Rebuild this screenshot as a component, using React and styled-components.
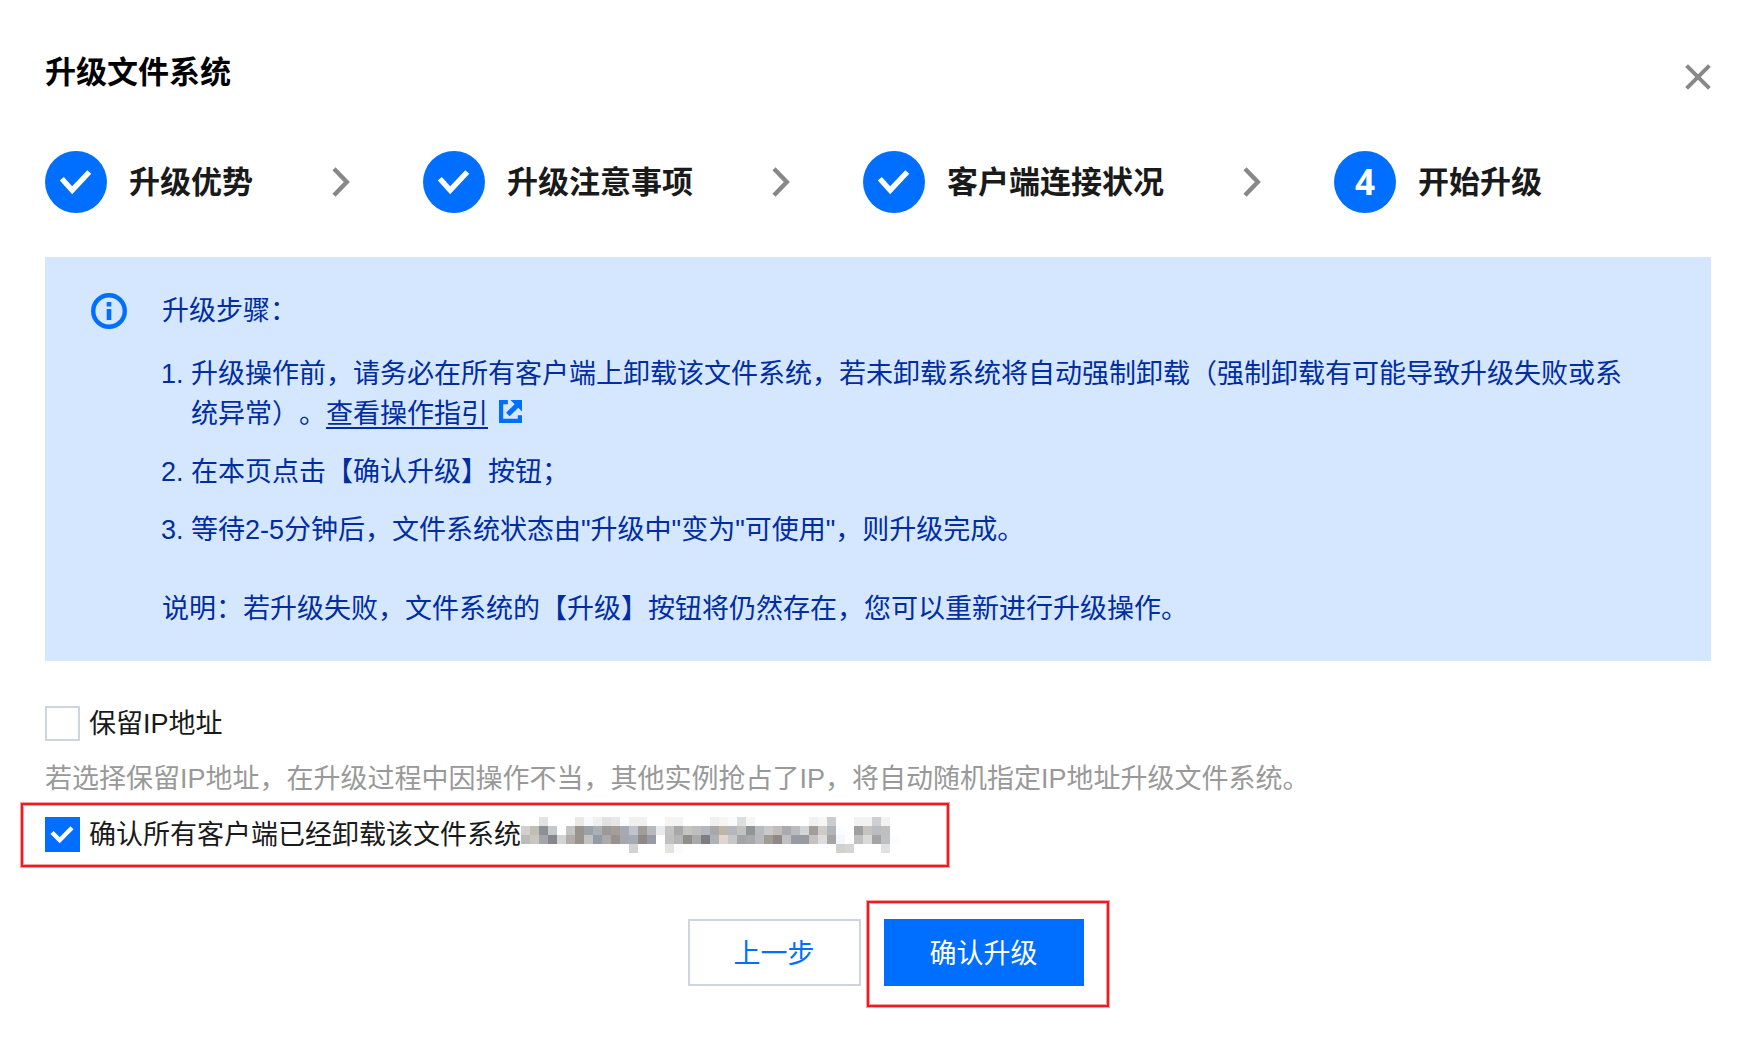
import { useState } from "react";
import styled, { createGlobalStyle } from "styled-components";

const GlobalStyle = createGlobalStyle`
  * {
    box-sizing: border-box;
  }

  body {
    margin: 0;
    background: #fff;
    color: #1a1a1a;
    font-family: "Liberation Sans", "Noto Sans CJK SC", sans-serif;
    font-size: 27px;
    line-height: 40px;
    text-spacing-trim: space-all;
  }
`;

const steps = ["升级优势", "升级注意事项", "客户端连接状况", "开始升级"];
const current = 3;

// one object per row, column -> color
const mosaic = [
    {
        2: "#e2e2e2", 6: "#ebe9e8", 7: "#f7f9fc", 8: "#f0f0f1", 9: "#e4e2e0", 10: "#e8e7e7",
        11: "#fafcff", 12: "#f0f0f0", 13: "#f0f0f0", 16: "#f6f4f3", 17: "#f3f4f6", 21: "#f0f0f1",
        22: "#f7f4f1", 23: "#f8fafd", 24: "#dadedc", 25: "#f5f5f5", 32: "#f0f0f1", 33: "#f7f6f4",
        34: "#cacccf", 37: "#f2f2f2", 38: "#f2f2f2", 39: "#cccfd3", 40: "#f2f2f2",
    },
    {
        0: "#d0d0cf", 1: "#c2beb5", 2: "#8d9197", 3: "#c5c9cd", 5: "#c5c4c4", 6: "#9a948d",
        7: "#9ca0a8", 8: "#a9b0b6", 9: "#9b9a98", 10: "#a69d99", 11: "#a6a9b3", 12: "#bfc4cc",
        13: "#a09c99", 14: "#b8b9bd", 15: "#e8e9ec", 16: "#c3c3c4", 17: "#a8a8a8", 18: "#c4c4c2",
        19: "#c1bdba", 20: "#b4b8c0", 21: "#a8a8a8", 22: "#c0b5a9", 23: "#b4b7be", 24: "#c2c2c0",
        25: "#8f959a", 26: "#b9babd", 27: "#c8c9ca", 28: "#c2bdb8", 29: "#aaabae", 30: "#b9bbc1",
        31: "#d4d5d8", 32: "#a39c9c", 33: "#cfcac4", 34: "#afb7bd", 35: "#fbfdff", 37: "#9f9f9d",
        38: "#c8c2bf", 39: "#b9bdc2", 40: "#bfbfbf",
    },
    {
        0: "#bcbbba", 1: "#cac6be", 2: "#a2a5aa", 3: "#84888c", 4: "#d3d3d3", 5: "#b2adaa",
        6: "#9a948d", 7: "#c3c3c4", 8: "#929ca7", 9: "#abaaa8", 10: "#99928c", 11: "#a4a7ad",
        12: "#a3abb3", 13: "#8f8884", 14: "#999ba4", 16: "#c0c0c1", 17: "#b5b5b5", 18: "#8e8d88",
        19: "#abaaaa", 20: "#7d7e81", 21: "#adb2b6", 22: "#e0d6cc", 23: "#c4c6c9", 24: "#a3a4a6",
        25: "#a7aaad", 26: "#b8b9ba", 27: "#9f9c96", 28: "#8f8884", 29: "#c0c0c1", 30: "#989ba1",
        31: "#999ba2", 32: "#c6c0c0", 33: "#dadddb", 34: "#a6a5a3", 35: "#f2f8fd", 37: "#bfbfbf",
        38: "#d9d9d5", 39: "#a3a3a5", 40: "#bfc0c1", 41: "#fcfefe",
    },
    { 12: "#d2d2d2", 16: "#e3e2e1", 17: "#f9fbfd", 35: "#d2d0cf", 36: "#d4d4d5", 40: "#e1e1e1" },
];

function Mosaic() {
    return (
        <svg width="378" height="36" shapeRendering="crispEdges" aria-hidden="true">
            {mosaic.map((row, y) =>
                Object.entries(row).map(([x, color]) => (
                    <rect key={x + "-" + y} x={x * 9} y={y * 9} width="9" height="9" fill={color} />
                ))
            )}
        </svg>
    );
}

function Check({ id, checked, onChange }) {
    return (
        <CheckBox>
            <input id={id} type="checkbox" checked={checked} onChange={onChange} />
            {checked && (
                <svg width="35" height="35" viewBox="0 0 35 35" fill="none">
                    <path d="M7 15.5L14.7 23.2L27 10.8" stroke="#fff" strokeWidth="4.4" />
                </svg>
            )}
        </CheckBox>
    );
}

function App() {
    const [keepIp, setKeepIp] = useState(false);
    const [confirmed, setConfirmed] = useState(true);

    return (
        <Dialog>
            <GlobalStyle />
            <Header>
                <h1>升级文件系统</h1>
                <CloseButton type="button" aria-label="关闭">
                    <svg width="26" height="26" viewBox="0 0 26 26" fill="none">
                        <path d="M1.6 1.6L24.4 24.4M24.4 1.6L1.6 24.4" stroke="#888" strokeWidth="4" />
                    </svg>
                </CloseButton>
            </Header>

            <Steps>
                {steps.map((step, i) => (
                    <Step key={step}>
                        <StepIcon>
                            {i < current ? (
                                <svg width="62" height="62" viewBox="0 0 62 62" fill="none">
                                    <path d="M16.8 27.8L27.2 39.2L44.3 21" stroke="#fff" strokeWidth="5.4" />
                                </svg>
                            ) : (
                                i + 1
                            )}
                        </StepIcon>
                        <StepLabel>{step}</StepLabel>
                        {i < steps.length - 1 && (
                            <Arrow width="18" height="30" viewBox="0 0 18 30" fill="none">
                                <path d="M2 1.8L14.8 15L2 28.2" stroke="#888" strokeWidth="4.4" />
                            </Arrow>
                        )}
                    </Step>
                ))}
            </Steps>

            <Notice>
                <InfoIcon width="36" height="36" viewBox="0 0 36 36" fill="none">
                    <circle cx="18" cy="18" r="15.8" stroke="#006eff" strokeWidth="4.4" />
                    <path d="M18 9V13.4M18 16V27" stroke="#006eff" strokeWidth="4.6" />
                </InfoIcon>
                <NoticeBody>
                    <p>升级步骤：</p>
                    <StepList>
                        <li>
                            升级操作前，请务必在所有客户端上卸载该文件系统，若未卸载系统将自动强制卸载（强制卸载有可能导致升级失败或系统异常）。<a href="#guide">查看操作指引</a>
                            <LinkIcon width="23" height="23" viewBox="0 0 22 22" fill="none">
                                <path d="M8.5 2H2V20H20V14.5" stroke="#006eff" strokeWidth="4" />
                                <path d="M11 0H22V11L18.4 7.4L10.2 15.6L6.8 12.2L15 4Z" fill="#006eff" />
                            </LinkIcon>
                        </li>
                        <li>在本页点击【确认升级】按钮；</li>
                        <li>等待2-5分钟后，文件系统状态由"升级中"变为"可使用"，则升级完成。</li>
                    </StepList>
                    <p>说明：若升级失败，文件系统的【升级】按钮将仍然存在，您可以重新进行升级操作。</p>
                </NoticeBody>
            </Notice>

            <Options>
                <Option>
                    <Check id="keep-ip" checked={keepIp} onChange={(e) => setKeepIp(e.target.checked)} />
                    <label htmlFor="keep-ip">保留IP地址</label>
                </Option>
                <Hint>若选择保留IP地址，在升级过程中因操作不当，其他实例抢占了IP，将自动随机指定IP地址升级文件系统。</Hint>
                <Option>
                    <Check id="unmounted" checked={confirmed} onChange={(e) => setConfirmed(e.target.checked)} />
                    <label htmlFor="unmounted">确认所有客户端已经卸载该文件系统</label>
                    <Mosaic />
                    <Mark $inset="-14px -50px -15px -24px" />
                </Option>
            </Options>

            <Footer>
                <Button type="button">上一步</Button>
                <Marked>
                    <Button type="button" $primary>确认升级</Button>
                    <Mark $inset="-18px -25px -21px -17px" />
                </Marked>
            </Footer>
        </Dialog>
    );
}

export default App;

const Dialog = styled.main`
  padding: 53px 50px 52px 45px;
`;

const Header = styled.header`
  display: flex;
  align-items: flex-end;
  justify-content: space-between;
  margin-bottom: 58px;

  h1 {
    margin: 0;
    font-size: 31px;
    line-height: 40px;
    color: #000;
  }
`;

const CloseButton = styled.button`
  display: flex;
  align-items: center;
  height: 32px;
  padding: 0;
  border: none;
  background: none;
  cursor: pointer;
`;

const Steps = styled.ol`
  display: flex;
  list-style: none;
  margin: 0 0 44px;
  padding: 0;
`;

const Step = styled.li`
  display: flex;
  align-items: center;
  font-size: 31px;
  font-weight: bold;
  white-space: nowrap;
`;

const StepIcon = styled.span`
  display: flex;
  align-items: center;
  justify-content: center;
  width: 62px;
  height: 62px;
  margin-right: 22px;
  border-radius: 50%;
  background: #006eff;
  color: #fff;
  font-family: "Open Sans", sans-serif;
  font-size: 35px;
`;

const StepLabel = styled.span`
  padding-top: 2px;
`;

const Arrow = styled.svg`
  margin: 0 73px 0 79px;
`;

const Notice = styled.section`
  display: flex;
  padding: 34px 80px 32px 46px;
  background: #d5e7ff;
  color: #002da0;
`;

const InfoIcon = styled.svg`
  flex: none;
  margin: 2px 35px 0 0;
`;

const NoticeBody = styled.div`
  flex: 1;

  p {
    margin: 0;
  }
`;

const StepList = styled.ol`
  display: flex;
  flex-direction: column;
  gap: 18px;
  margin: 23px 0 39px;
  padding-left: 29px;

  a {
    color: inherit;
    text-underline-offset: 4px;
    text-decoration-thickness: 2px;
  }
`;

const LinkIcon = styled.svg`
  margin-left: 11px;
`;

const Options = styled.div`
  display: flex;
  flex-direction: column;
  align-items: flex-start;
  gap: 18px;
  margin: 45px 0 67px;
`;

const Option = styled.div`
  position: relative;
  display: flex;
  align-items: center;
  height: 35px;
`;

const CheckBox = styled.span`
  display: grid;
  margin-right: 9px;

  input,
  svg {
    grid-area: 1 / 1;
  }

  svg {
    pointer-events: none;
  }

  input {
    appearance: none;
    width: 35px;
    height: 35px;
    margin: 0;
    border: 2px solid #cfd5de;
    background: #fff;
  }

  input:checked {
    border-color: #006eff;
    background: #006eff;
  }
`;

const Hint = styled.p`
  margin: 0;
  color: #999;
`;

const Mark = styled.span`
  position: absolute;
  inset: ${(props) => props.$inset};
  border: 2px solid #ed1c24;
  box-shadow: 0 0 0 1px #f9a0a3, inset 0 0 0 1px #f9a0a3;
  pointer-events: none;
`;

const Footer = styled.footer`
  display: flex;
  justify-content: center;
  gap: 23px;
  padding-left: 15px;
`;

const Marked = styled.div`
  position: relative;
`;

const Button = styled.button`
  height: 67px;
  padding: 2px 44px 0;
  border: 2px solid ${(props) => (props.$primary ? "#006eff" : "#cfd5de")};
  background: ${(props) => (props.$primary ? "#006eff" : "#fff")};
  color: ${(props) => (props.$primary ? "#fff" : "#006eff")};
  font: inherit;
  cursor: pointer;
`;
